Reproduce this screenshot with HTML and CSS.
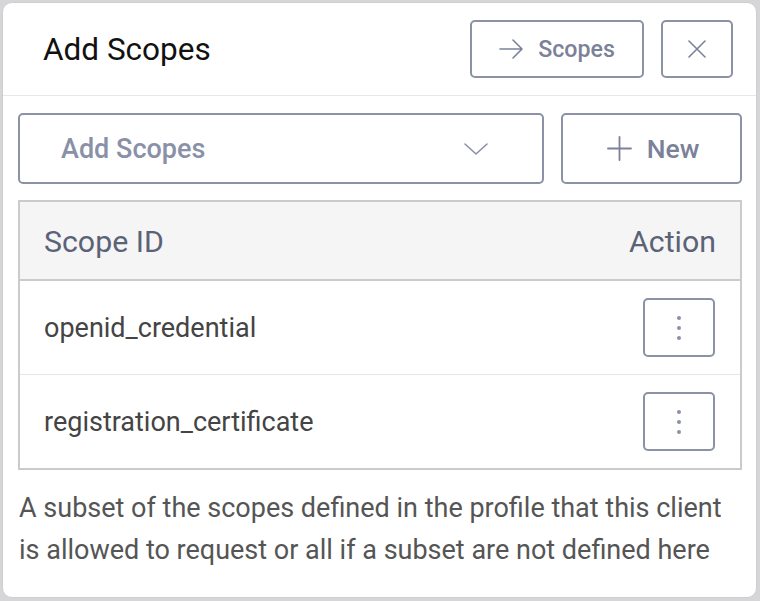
FILE: index.html
```html
<!DOCTYPE html>
<html lang="en">
<head>
<meta charset="utf-8">
<title>Add Scopes</title>
<link rel="stylesheet" href="styles.css">
</head>
<body>
<div class="card">
  <div class="header">
    <h1 class="title">Add Scopes</h1>
    <div class="header-actions">
      <button class="btn btn-scopes">
        <svg class="icon-arrow" width="24" height="20" viewBox="0 0 24 20" fill="none" stroke="currentColor" stroke-width="1.6" stroke-linecap="round" stroke-linejoin="round"><path d="M1 10H23M14 1L23 10L14 19"/></svg>
        <span>Scopes</span>
      </button>
      <button class="btn btn-close" aria-label="Close">
        <svg width="18" height="18" viewBox="0 0 18 18" fill="none" stroke="currentColor" stroke-width="1.6" stroke-linecap="round"><path d="M1 1L17 17M17 1L1 17"/></svg>
      </button>
    </div>
  </div>
  <div class="body">
    <div class="controls">
      <div class="select">
        <span class="placeholder">Add Scopes</span>
        <svg class="chevron" width="24" height="12" viewBox="0 0 24 12" fill="none" stroke="currentColor" stroke-width="1.6" stroke-linecap="round" stroke-linejoin="round"><path d="M1 1L12 11L23 1"/></svg>
      </div>
      <button class="btn btn-new">
        <svg width="25" height="25" viewBox="0 0 25 25" fill="none" stroke="currentColor" stroke-width="1.8" stroke-linecap="round"><path d="M12.5 1V24M1 12.5H24"/></svg>
        <span>New</span>
      </button>
    </div>
    <div class="table">
      <div class="row head">
        <div class="cell">Scope ID</div>
        <div class="cell action">Action</div>
      </div>
      <div class="row">
        <div class="cell">openid_credential</div>
        <div class="cell action"><button class="btn btn-kebab" aria-label="More"><span class="dot"></span><span class="dot"></span><span class="dot"></span></button></div>
      </div>
      <div class="row last">
        <div class="cell">registration_certificate</div>
        <div class="cell action"><button class="btn btn-kebab" aria-label="More"><span class="dot"></span><span class="dot"></span><span class="dot"></span></button></div>
      </div>
    </div>
    <p class="help">A subset of the scopes defined in the profile that this client is allowed to request or all if a subset are not defined here</p>
  </div>
</div>
</body>
</html>
```

FILE: styles.css
```css
* { box-sizing: border-box; }
html, body { margin: 0; padding: 0; }
body {
  background: #d6d6d8;
  font-family: Roboto, "Liberation Sans", Arial, sans-serif;
  width: 760px;
  height: 601px;
  overflow: hidden;
}
.card {
  margin: 2px 0 0 2px;
  width: 755px;
  height: 596px;
  background: #fff;
  border-radius: 10px;
  border: 1px solid #cfcfd2;
}
.header {
  display: flex;
  align-items: center;
  justify-content: space-between;
  height: 93px;
  padding: 0 23px 0 40px;
  border-bottom: 1px solid #e7e7e9;
}
.title {
  margin: 0;
  font-size: 31.5px;
  font-weight: 400;
  color: #111;
}
.header-actions {
  display: flex;
  gap: 17px;
}
.btn {
  display: flex;
  align-items: center;
  justify-content: center;
  background: #fff;
  border: 2px solid #8c92a6;
  border-radius: 5px;
  color: #7b8199;
  font-family: inherit;
  font-weight: 500;
  padding: 0;
}
.btn-scopes {
  width: 174px;
  height: 58px;
  gap: 15px;
  font-size: 23.2px;
}
.btn-close {
  width: 72px;
  height: 58px;
}
.body {
  padding: 17px 14px 0 15px;
}
.controls {
  display: flex;
  gap: 17px;
}
.select {
  flex: 0 0 526px;
  height: 71px;
  border: 2px solid #8c92a6;
  border-radius: 5px;
  display: flex;
  align-items: center;
  justify-content: space-between;
  padding: 0 54px 0 41px;
  color: #8a91a7;
}
.placeholder {
  font-size: 27px;
  font-weight: 500;
  color: #8a91a7;
}
.btn-new {
  width: 182px;
  height: 71px;
  gap: 15px;
  font-size: 26.5px;
  padding-left: 3px;
}
.table {
  margin-top: 16px;
  width: 724px;
  border: 2px solid #cbcbcd;
}
.row {
  display: flex;
  align-items: center;
  justify-content: space-between;
  height: 94px;
  padding: 0 24px 0 24px;
  border-bottom: 1px solid #e6e6e8;
  font-size: 27px;
  color: #444;
}
.row.head {
  height: 79px;
  background: #f5f5f6;
  border-bottom: 2px solid #cbcbcd;
  color: #5b6276;
  font-size: 30.3px;
  padding-top: 2px;
}
.row.last { border-bottom: none; height: 93px; }
.btn-kebab {
  width: 72px;
  height: 59px;
  flex-direction: column;
  gap: 6px;
  margin-right: 1px;
}
.dot {
  width: 4px;
  height: 4px;
  border-radius: 50%;
  background: #8c92a6;
}
.help {
  margin: 17px 10px 0 1px;
  font-size: 27px;
  line-height: 42px;
  color: #555;
}
```
